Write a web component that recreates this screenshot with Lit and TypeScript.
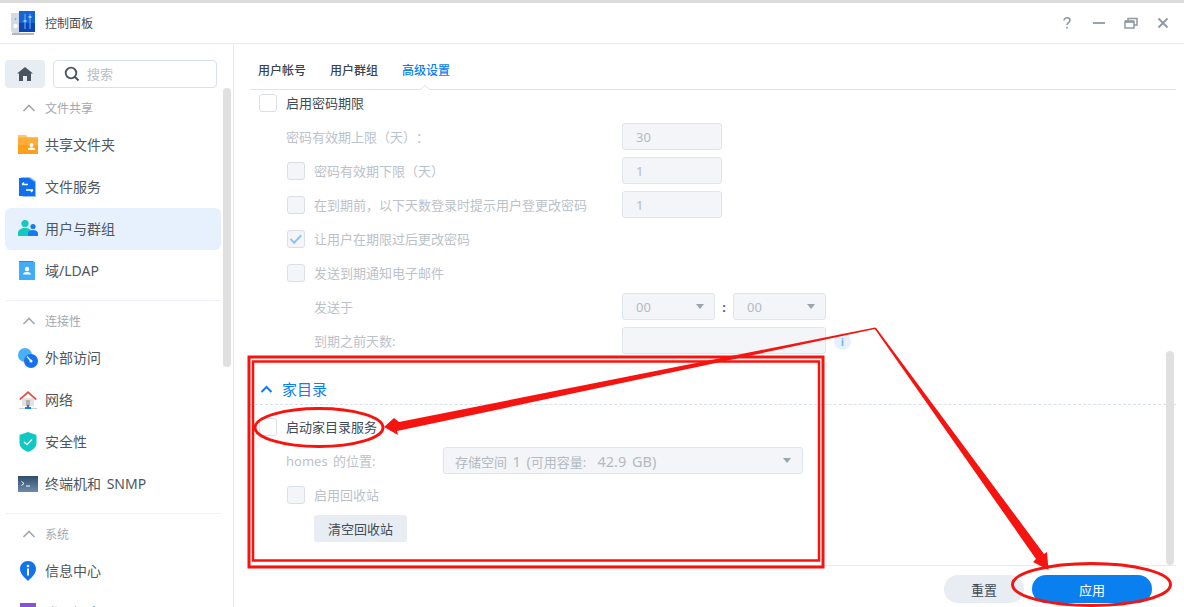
import { LitElement, html, css, svg } from "lit";
import { customElement } from "lit/decorators.js";

const icons: Record<string, unknown> = {
  folder: svg`<svg width="20" height="20" viewBox="0 0 20 20"><path d="M0 0h8l2 2.500H0z" fill="#ffc56b"/><path d="M0 2.500h20V19H0z" fill="#ff9f1c"/><path d="M0 2.500h20V10H0z" fill="#ffad3a"/><circle cx="13.500" cy="10" r="2" fill="#fff"/><path d="M10 15h7v-1c0-1-1.500-1.500-3.500-1.500s-3.500.5-3.500 1.500z" fill="#fff"/></svg>`,
  files: svg`<svg width="20" height="20" viewBox="0 0 20 20"><path d="M3 0h9l6 4v16H5z" fill="#8cc2fa"/><path d="M1 1h10l6 4v14H1z" fill="#0f6fee"/><path d="M4 7.500h6M4 7.500l2-2M15 13H8M15 13l-2 2" stroke="#fff" stroke-width="1.300" fill="none"/></svg>`,
  users: svg`<svg width="20" height="20" viewBox="0 0 20 20"><circle cx="7" cy="4.500" r="3.600" fill="#14c8c0"/><path d="M0 17v-3c0-3 3-5 7-5s7 2 7 5v3z" fill="#14c8c0"/><circle cx="15" cy="7.500" r="2.600" fill="#1a78f0"/><path d="M10 17v-2.500c0-2 2-3.500 5-3.500s5 1.500 5 3.500V17z" fill="#1a78f0"/></svg>`,
  ldap: svg`<svg width="20" height="20" viewBox="0 0 20 20"><path d="M1 0h14l1 1H1z" fill="#1d8bf0"/><path d="M1 1h16v18H1z" fill="#40adfa"/><circle cx="9" cy="8" r="2.200" fill="#fff"/><path d="M5 13.500c0-1.500 1.500-2.500 4-2.500s4 1 4 2.500z" fill="#fff"/></svg>`,
  ext: svg`<svg width="20" height="20" viewBox="0 0 20 20"><circle cx="7" cy="7" r="7" fill="#49b1fb"/><circle cx="13" cy="13" r="7" fill="#1672ec"/><path d="M9 8.500l4 4.500" stroke="#fff" stroke-width="1.200"/><circle cx="13" cy="13" r="1.500" fill="#fff"/></svg>`,
  net: svg`<svg width="20" height="20" viewBox="0 0 20 20"><path d="M4 8h12v8H4z" fill="#e4e2e0"/><path d="M8 10h4v6H8z" fill="#b3b0ad"/><path d="M1 9l9-8 9 8-1.500 1L10 3.500 2.500 10z" fill="#df5349"/><path d="M1 18h18v1H1z" fill="#c7ccd2"/><path d="M9 15h2v2h2v2H7v-2h2z" fill="#1a78f0"/></svg>`,
  shield: svg`<svg width="20" height="20" viewBox="0 0 20 20"><path d="M10 0l8.500 3v8c0 4-4 7.500-8.500 9-4.500-1.500-8.500-5-8.500-9V3z" fill="#0ec9c3"/><path d="M6 10l3 2.500 5-5" stroke="#fff" stroke-width="1.400" fill="none"/></svg>`,
  term: svg`<svg width="20" height="20" viewBox="0 0 20 20"><defs><linearGradient id="tg" x1="0" y1="0" x2="0" y2="1"><stop offset="0" stop-color="#2f4c6c"/><stop offset="1" stop-color="#6d8cac"/></linearGradient></defs><path d="M0 2h20v16H0z" fill="url(#tg)"/><path d="M3.500 7.500l2.500 2-2.500 2M8 12h4" stroke="#fff" stroke-width="1" fill="none"/></svg>`,
  info: svg`<svg width="20" height="20" viewBox="0 0 20 20"><path d="M10 0c4.500 0 8 3.500 8 8 0 5-5 9-8 12-3-3-8-7-8-12 0-4.500 3.500-8 8-8z" fill="#1274ec"/><circle cx="10" cy="5" r="1.300" fill="#fff"/><path d="M9 7.500h2v7H9z" fill="#fff"/></svg>`,
  login: svg`<svg width="20" height="20" viewBox="0 0 20 20"><path d="M2 0h16v20H2z" fill="#8654cc"/></svg>`,
};

const groups = [
  { title: "文件共享", items: [["folder", "共享文件夹"], ["files", "文件服务"], ["users", "用户与群组", 1], ["ldap", "域/LDAP"]] },
  { title: "连接性", items: [["ext", "外部访问"], ["net", "网络"], ["shield", "安全性"], ["term", "终端机和 SNMP"]] },
  { title: "系统", items: [["info", "信息中心"], ["login", "登录门户"]] },
];

@customElement("app-root")
export class AppRoot extends LitElement {
  static styles = css`
    :host { display: block; width: 1184px; height: 607px; position: relative; overflow: hidden; background: #fff;
      font-family: "Noto Sans", "Noto Sans CJK SC", sans-serif; font-size: 13px; color: #414b55; word-spacing: 2px; text-spacing-trim: space-all; }
    .strip { height: 3px; background: #dcdcdc; }
    .titlebar { height: 41px; box-sizing: border-box; border-bottom: 1px solid #e6ebf2; display: flex; align-items: center; padding: 0 14px 0 11px; }
    .app-ico { display: block; margin-right: 10px; }
    .title { font-size: 12px; flex: 1; }
    .wbtn { display: block; }
    .wbtns { display: flex; align-items: center; gap: 16px; }
    .wbtn.q { margin-right: 2px; }
    .body { display: flex; height: 563px; }
    .side { width: 234px; box-sizing: border-box; border-right: 1px solid #e6ebf2; position: relative; overflow: hidden; padding: 16px 0 0 5px; }
    .searchrow { display: flex; gap: 8px; width: 212px; }
    .home { width: 40px; height: 28px; background: #e8edf4; border-radius: 4px; display: flex; align-items: center; justify-content: center; }
    .search { width: 164px; height: 28px; box-sizing: border-box; border: 1px solid #d9e2ec; border-radius: 4px; display: flex; align-items: center; padding-left: 10px; gap: 7px; color: #b8bec6; font-size: 13px; }
    .search span { padding-bottom: 2px; }
    .sb1 { position: absolute; left: 223px; top: 44px; width: 8px; height: 279px; border-radius: 4px; background: #e0e0e0; }
    .group { width: 216px; border-bottom: 1px solid #eef1f5; padding-bottom: 8px; }
    .group:last-child { border-bottom: 0; }
    .gh { height: 36px; box-sizing: border-box; padding: 4px 0 0 17px; display: flex; align-items: center; gap: 9px; font-size: 12px; color: #a3a9b0; }
    .item { height: 42px; display: flex; align-items: center; padding-left: 13px; gap: 7px; border-radius: 6px; font-size: 14px; color: #4d5761; box-sizing: border-box; }
    .item span { padding-bottom: 2px; }
    .item.on { background: #e6f1fd; }
    .item svg { display: block; flex: none; }
    .main { flex: 1; position: relative; display: flex; flex-direction: column; min-width: 0; }
    .tabs { height: 46px; box-sizing: border-box; margin: 0 8px 0 16px; border-bottom: 1px solid #dfe5ec; display: flex; gap: 24px; padding: 18px 0 0 8px; position: relative; font-size: 12px; font-weight: 500; color: #3a444e; line-height: 17px; }
    .tabs .act { color: #0a80f0; }
    .notch { position: absolute; left: 170px; bottom: -1px; width: 10px; height: 5px; overflow: visible; display: block; }
    .scroll { height: 476px; margin: 0 8px 0 16px; position: relative; box-sizing: border-box; border-bottom: 1px solid #e6e9ed; }
    .sb2 { position: absolute; left: 916px; top: 261px; width: 8px; height: 214px; border-radius: 4px; background: #e0e0e0; }
    .row { height: 34px; display: grid; grid-template-columns: 372px auto; align-items: center; }
    .row.first { height: 26px; margin-bottom: 4px; }
    .row.home-row { grid-template-columns: 193px auto; }
    .cell { display: flex; align-items: center; gap: 9px; white-space: nowrap; color: #bcc2c9; }
    .cell > span:not(.cb) { padding-bottom: 2px; }
    .cell.on { color: #414b55; }
    .l0 { padding-left: 9px; }
    .l1 { padding-left: 36px; }
    .l1c { padding-left: 37px; }
    .l2 { padding-left: 64px; }
    .cb { width: 18px; height: 18px; box-sizing: border-box; border: 1px solid #d8dfe7; border-radius: 3px; background: #f3f5f8; flex: none; display: flex; align-items: center; justify-content: center; }
    .cb.en { background: #fff; }
    .field { height: 27px; margin-bottom: 1px; box-sizing: border-box; border: 1px solid #dfe5ec; border-radius: 3px; background: #f3f5f8; color: #b3bac2; display: flex; align-items: center; justify-content: space-between; padding: 0 13px; font-size: 13px; white-space: pre; }
    .w100 { width: 100px; }
    .w93 { width: 93px; padding-right: 10px; }
    .w204 { width: 204px; }
    .w360 { width: 360px; padding: 0 11px; }
    .lat { font-size: 14.5px; }
    .caret { width: 0; height: 0; border-left: 4.500px solid transparent; border-right: 4.500px solid transparent; border-top: 5px solid #9ba5b0; }
    .ctrls { display: flex; align-items: center; }
    .colon { width: 18px; text-align: center; font-weight: 700; color: #5a646e; }
    .tip { width: 17px; height: 17px; border-radius: 50%; background: #e6f1fd; color: #7db8f3; font-size: 11px; font-weight: 700; display: flex; align-items: center; justify-content: center; margin-left: 8px; }
    .sect { height: 30px; margin-top: 16px; margin-bottom: 5px; border-bottom: 1px dashed #d8e0e8; display: flex; align-items: center; gap: 9px; padding-left: 10px; color: #0a80f0; font-size: 15px; }
    .sect span { padding-bottom: 2px; }
    .clean { margin: 3px 0 0 64px; width: 93px; height: 27px; background: #e8edf4; border-radius: 3px; display: flex; align-items: center; justify-content: center; color: #414b55; }
    .foot { flex: 1; display: flex; justify-content: flex-end; padding: 9px 32px 0 0; gap: 8px; }
    .btn { height: 28px; border-radius: 14px; display: flex; align-items: center; justify-content: center; background: #e8edf4; width: 80px; }
    .btn.pri { background: #0a80f0; color: #fff; width: 120px; }
    .anno { position: absolute; left: 0; top: 0; pointer-events: none; display: block; }
  `;

  private chk(checked = false, en = false) {
    return html`<span class="cb ${en ? "en" : ""}">${checked
      ? svg`<svg width="14" height="14" viewBox="0 0 14 14"><path d="M1.500 7l3.700 3.700 7-7.500" stroke="#8ec5f5" stroke-width="2" fill="none"/></svg>`
      : ""}</span>`;
  }

  render() {
    return html`
      <div class="strip"></div>
      <div class="titlebar">
        <svg class="app-ico" width="24" height="24" viewBox="0 0 24 24"><path d="M0 2h9v20H2l-2-2z" fill="#d5d9e4"/><circle cx="4.500" cy="15" r="2.200" fill="#fff"/><circle cx="4.500" cy="8" r=".8" fill="#8a93a3"/><path d="M8 0h16v21H8z" fill="#1465d8"/><path d="M8 12h16v9H8z" fill="#0c46b4"/><path d="M14 3v15M19 3v15" stroke="#7ab3f5" stroke-width="1"/><path d="M12.500 10h3M17.500 6h3" stroke="#bcd9fb" stroke-width="1.500"/><path d="M1 22h22v2H1z" fill="#aeb6c8"/></svg>
        <span class="title">控制面板</span>
        <div class="wbtns">
          <svg class="wbtn q" width="14" height="14" viewBox="0 0 14 14"><path d="M4 4.500C4 2.800 5.300 1.800 7 1.800s3 1 3 2.500c0 2.300-3 2.300-3 4.700M7 10.700v1.800" stroke="#8f98a2" stroke-width="1.600" fill="none"/></svg>
          <svg class="wbtn" width="14" height="14" viewBox="0 0 14 14"><path d="M1 7h12" stroke="#8f98a2" stroke-width="1.800"/></svg>
          <svg class="wbtn" width="18" height="14" viewBox="0 0 18 14"><path d="M3 5.500h9v6.500H3zM6 5V2.500h9V9h-2.500" stroke="#8f98a2" stroke-width="1.500" fill="none"/><path d="M3 5.500h9" stroke="#8f98a2" stroke-width="2.500"/></svg>
          <svg class="wbtn" width="14" height="14" viewBox="0 0 14 14"><path d="M2.500 2.500l9 9M11.500 2.500l-9 9" stroke="#8f98a2" stroke-width="1.800"/></svg>
        </div>
      </div>
      <div class="body">
        <aside class="side">
          <div class="searchrow">
            <div class="home"><svg width="16" height="14" viewBox="0 0 16 14"><path d="M8 0l8 6.500h-2V14h-4V9H6v5H2V6.500H0z" fill="#4a545e"/></svg></div>
            <div class="search"><svg width="16" height="16" viewBox="0 0 16 16"><circle cx="7" cy="7" r="5.300" stroke="#4a545e" stroke-width="1.800" fill="none"/><path d="M10.800 10.800l3.700 3.700" stroke="#4a545e" stroke-width="2"/></svg><span>搜索</span></div>
          </div>
          <div class="sb1"></div>
          ${groups.map((g) => html`
            <div class="group">
              <div class="gh"><svg width="14" height="8" viewBox="0 0 14 8"><path d="M1.500 7L7 1.500 12.500 7" stroke="#a3a9b0" stroke-width="1.700" fill="none"/></svg><span>${g.title}</span></div>
              ${g.items.map((it) => html`<div class="item ${it[2] ? "on" : ""}">${icons[it[0] as string]}<span>${it[1]}</span></div>`)}
            </div>`)}
        </aside>
        <section class="main">
          <div class="tabs">
            <span>用户帐号</span><span>用户群组</span><span class="act">高级设置</span>
            <svg class="notch" viewBox="0 0 10 5"><path d="M0 5L5 0l5 5" fill="#fff" stroke="#dfe5ec"/></svg>
          </div>
          <div class="scroll">
            <div class="row first"><div class="cell on l0">${this.chk(false, true)}<span>启用密码期限</span></div></div>
            <div class="row"><div class="cell l1"><span>密码有效期上限（天）：</span></div><div class="field w100">30</div></div>
            <div class="row"><div class="cell l1c">${this.chk()}<span>密码有效期下限（天）</span></div><div class="field w100">1</div></div>
            <div class="row"><div class="cell l1c">${this.chk()}<span>在到期前，以下天数登录时提示用户登更改密码</span></div><div class="field w100">1</div></div>
            <div class="row"><div class="cell l1c">${this.chk(true)}<span>让用户在期限过后更改密码</span></div></div>
            <div class="row"><div class="cell l1c">${this.chk()}<span>发送到期通知电子邮件</span></div></div>
            <div class="row"><div class="cell l2"><span>发送于</span></div><div class="ctrls"><div class="field w93">00<i class="caret"></i></div><span class="colon">:</span><div class="field w93">00<i class="caret"></i></div></div></div>
            <div class="row"><div class="cell l2"><span>到期之前天数:</span></div><div class="ctrls"><div class="field w204"></div><span class="tip">i</span></div></div>
            <div class="sect"><svg width="13" height="8" viewBox="0 0 13 8"><path d="M1.500 7l5-5 5 5" stroke="#0a80f0" stroke-width="2" fill="none"/></svg><span>家目录</span></div>
            <div class="row"><div class="cell on l0">${this.chk(false, true)}<span>启动家目录服务</span></div></div>
            <div class="row home-row"><div class="cell l1"><span>homes 的位置:</span></div><div class="field w360"><span>存储空间 <span class="lat">1 (</span>可用容量: <span class="lat"> 42.9 GB)</span></span><i class="caret"></i></div></div>
            <div class="row"><div class="cell l1c">${this.chk()}<span>启用回收站</span></div></div>
            <div class="clean">清空回收站</div>
            <div class="sb2"></div>
          </div>
          <div class="foot"><div class="btn">重置</div><div class="btn pri">应用</div></div>
        </section>
      </div>
      <svg class="anno" width="1184" height="607" viewBox="0 0 1184 607" fill="none">
        <rect x="249" y="357" width="574" height="210" stroke="#f5140f" stroke-width="3"/>
        <rect x="253" y="361.500" width="566" height="199" stroke="#f5140f" stroke-width="2.500"/>
        <ellipse cx="319" cy="427.500" rx="64" ry="19" stroke="#f5140f" stroke-width="3"/>
        <ellipse cx="1091.500" cy="584.500" rx="79" ry="21" stroke="#f5140f" stroke-width="3"/>
        <path d="M875 327.500L399 422 394 418 384 427 398 435 397 431 875 329z" fill="#f5140f"/>
        <path d="M874.500 328.500L1036 559 1033 562 1048.500 570 1047 552 1044 554 875.800 327.500z" fill="#f5140f"/>
      </svg>
    `;
  }
}
